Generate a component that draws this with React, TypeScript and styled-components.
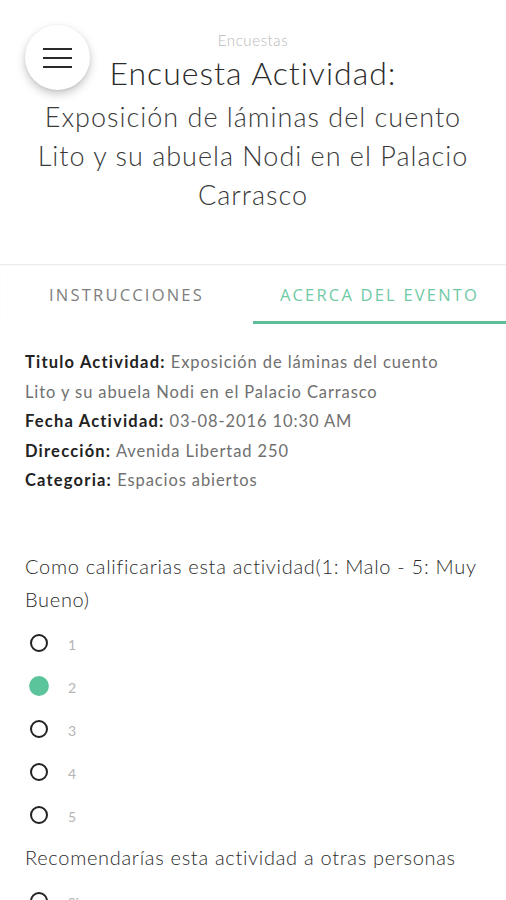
import React from "react";
import styled, { createGlobalStyle } from "styled-components";

const Global = createGlobalStyle`
  html, body { margin: 0; padding: 0; background: #ffffff; }
  body { font-family: "Lato", "Noto Sans", sans-serif; color: #333; }
  * { box-sizing: border-box; }
`;

const Page = styled.div`
  width: 506px;
  height: 900px;
  overflow: hidden;
  position: relative;
  background: #fff;
`;

const MenuButton = styled.button`
  position: absolute;
  left: 25px;
  top: 25px;
  width: 65px;
  height: 65px;
  border-radius: 50%;
  border: none;
  background: #fff;
  box-shadow: 0 4px 10px rgba(0, 0, 0, 0.22), 0 1px 3px rgba(0, 0, 0, 0.08);
  display: flex;
  flex-direction: column;
  align-items: center;
  justify-content: center;
  gap: 7px;
  padding: 0;
`;

const MenuLine = styled.span`
  display: block;
  width: 29px;
  height: 2px;
  background: #2a2a2a;
`;

const Header = styled.header`
  display: flex;
  flex-direction: column;
  align-items: center;
  padding: 31px 20px 0;
  height: 264px;
  text-align: center;
`;

const Section = styled.div`
  font-size: 15px;
  line-height: 18px;
  font-weight: 300;
  letter-spacing: 0.6px;
  color: #b8b8b8;
`;

const Title = styled.h1`
  margin: 4px 0 0;
  font-size: 32px;
  line-height: 40px;
  font-weight: 300;
  color: #2b2b2b;
  letter-spacing: 1px;
`;

const Subtitle = styled.h2`
  margin: 4px 0 0;
  font-size: 27px;
  line-height: 39px;
  font-weight: 300;
  color: #3a3a3a;
  letter-spacing: 1px;
  width: 470px;
`;

const Tabs = styled.nav`
  display: grid;
  grid-template-columns: 1fr 1fr;
  border-top: 1px solid #ececec;
  box-shadow: inset 0 1px 2px rgba(0, 0, 0, 0.03);
  height: 60px;
`;

const Tab = styled.div<{ $active?: boolean }>`
  display: flex;
  align-items: center;
  justify-content: center;
  font-family: "Open Sans", "Noto Sans", sans-serif;
  font-size: 16.5px;
  letter-spacing: 2.2px;
  color: ${(p) => (p.$active ? "#6fcaa5" : "#7e7e7e")};
  border-bottom: 3px solid ${(p) => (p.$active ? "#5cbf98" : "transparent")};
  padding-top: 2px;
`;

const Content = styled.main`
  padding: 24px 25px 0;
`;

const Details = styled.div`
  max-width: 434px;
  font-size: 16.5px;
  line-height: 29.5px;
  letter-spacing: 0.9px;
  color: #707070;
  font-weight: 400;
`;

const Label = styled.b`
  font-weight: 700;
  color: #222;
  letter-spacing: 1.2px;
`;

const Question = styled.p<{ $top: number }>`
  margin: ${(p) => p.$top}px 0 0;
  font-size: 20px;
  line-height: 33px;
  font-weight: 300;
  letter-spacing: 0.7px;
  color: #2b2b2b;
`;

const Options = styled.div`
  display: flex;
  flex-direction: column;
  margin-top: 6px;
`;

const Option = styled.div`
  display: flex;
  align-items: center;
  height: 43px;
  padding-left: 5px;
`;

const Radio = styled.span<{ $checked?: boolean }>`
  width: 18px;
  height: 18px;
  border-radius: 50%;
  border: ${(p) => (p.$checked ? "none" : "2px solid #222")};
  background: ${(p) => (p.$checked ? "#5cc49a" : "transparent")};
  transform: ${(p) => (p.$checked ? "scale(1.1)" : "none")};
  flex: none;
`;

const OptionLabel = styled.span`
  margin-left: 20px;
  font-size: 14px;
  color: #b5b5b5;
  font-weight: 400;
  padding-top: 2px;
`;

export default function App() {
  const ratings = ["1", "2", "3", "4", "5"];
  return (
    <Page>
      <Global />
      <MenuButton aria-label="menu">
        <MenuLine />
        <MenuLine />
        <MenuLine />
      </MenuButton>
      <Header>
        <Section>Encuestas</Section>
        <Title>Encuesta Actividad:</Title>
        <Subtitle>
          Exposición de láminas del cuento Lito y su abuela Nodi en el Palacio Carrasco
        </Subtitle>
      </Header>
      <Tabs>
        <Tab>INSTRUCCIONES</Tab>
        <Tab $active>ACERCA DEL EVENTO</Tab>
      </Tabs>
      <Content>
        <Details>
          <div>
            <Label>Titulo Actividad:</Label> Exposición de láminas del cuento Lito y su abuela Nodi en el Palacio Carrasco
          </div>
          <div>
            <Label>Fecha Actividad:</Label> 03-08-2016 10:30 AM
          </div>
          <div>
            <Label>Dirección:</Label> Avenida Libertad 250
          </div>
          <div>
            <Label>Categoria:</Label> Espacios abiertos
          </div>
        </Details>
        <Question $top={54}>Como calificarias esta actividad(1: Malo - 5: Muy Bueno)</Question>
        <Options>
          {ratings.map((r) => (
            <Option key={r}>
              <Radio $checked={r === "2"} />
              <OptionLabel>{r}</OptionLabel>
            </Option>
          ))}
        </Options>
        <Question $top={4}>Recomendarías esta actividad a otras personas</Question>
        <Options>
          <Option>
            <Radio />
            <OptionLabel>Si</OptionLabel>
          </Option>
        </Options>
      </Content>
    </Page>
  );
}
